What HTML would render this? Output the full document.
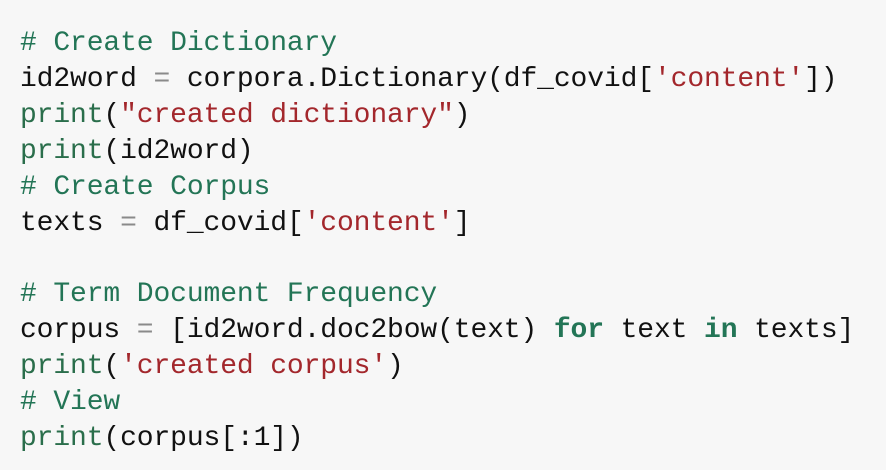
<!DOCTYPE html>
<html><head><meta charset="utf-8"><style>
html,body{margin:0;padding:0;background:#f7f7f7;}
body{width:886px;height:470px;overflow:hidden;}
pre{margin:0;position:absolute;left:20px;top:26px;font-family:"Liberation Mono",monospace;font-size:28px;letter-spacing:-0.12px;line-height:35.9px;color:#111;}
.c{color:#237556;}
.f{color:#2a6e4b;}
.s{color:#a3272c;}
.o{color:#8a8a8a;}
.k{color:#237556;font-weight:bold;}
</style></head><body>
<pre><span class="c"># Create Dictionary</span>
id2word <span class="o">=</span> corpora.Dictionary(df_covid[<span class="s">'content'</span>])
<span class="f">print</span>(<span class="s">"created dictionary"</span>)
<span class="f">print</span>(id2word)
<span class="c"># Create Corpus</span>
texts <span class="o">=</span> df_covid[<span class="s">'content'</span>]

<span class="c"># Term Document Frequency</span>
corpus <span class="o">=</span> [id2word.doc2bow(text) <span class="k">for</span> text <span class="k">in</span> texts]
<span class="f">print</span>(<span class="s">'created corpus'</span>)
<span class="c"># View</span>
<span class="f">print</span>(corpus[:1])</pre>
</body></html>
